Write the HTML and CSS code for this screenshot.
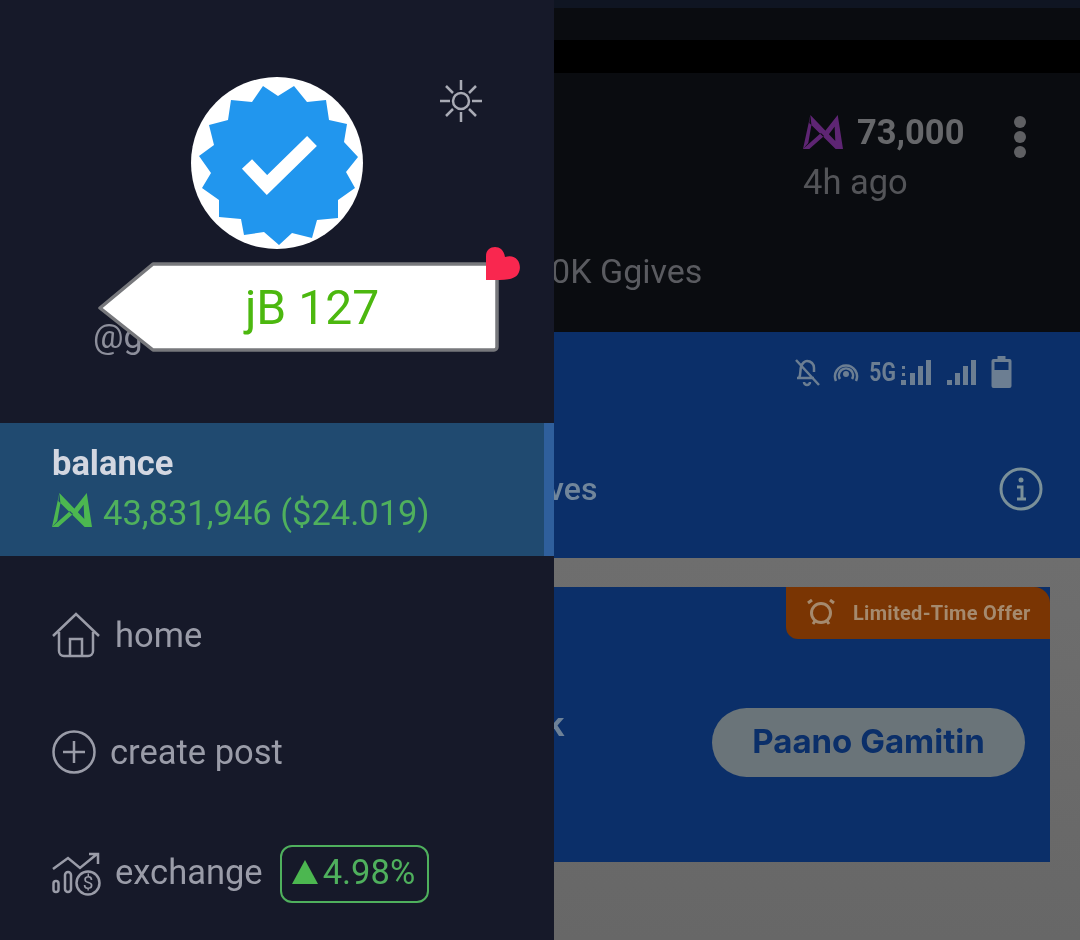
FILE: index.html
```html
<!DOCTYPE html>
<html lang="en">
<head>
    <meta charset="UTF-8">
    <meta name="viewport" content="width=device-width, initial-scale=1.0">
    <title>Menu</title>
    <link rel="stylesheet" href="styles.css">
</head>
<body>

<div class="drawer">
    <div class="profile">
        <div class="avatar">
            <svg viewBox="0 0 172 172" width="172" height="172">
                <polygon class="seal" points="72,9 87,19 103,9 116,25 135,23 138,43 156,47 153,65 167,80 155,95 164,111 147,123 147,141 126,143 121,161 101,156 88,168 73,155 53,158 50,142 28,140 28,123 11,111 20,96 8,79 23,68 18,48 37,43 40,23 61,25"/>
                <polyline class="tick" points="56,87 76,108 121,64"/>
            </svg>
        </div>
        <svg class="sun" viewBox="0 0 44 44" width="44" height="44">
            <circle cx="22" cy="22" r="8"/>
            <path d="M22 1v10M22 33v10M1 22h10M33 22h10M7 7l7 7M30 30l7 7M7 37l7-7M30 14l7-7"/>
        </svg>
        <div class="handle">@g</div>
        <div class="tag">
            <svg class="tag-shape" viewBox="0 0 403 91" width="403" height="91">
                <path d="M56 2 H397 a3 3 0 0 1 3 3 V85 a3 3 0 0 1 -3 3 H56 L3 46 Z"/>
            </svg>
            <span class="tag-text">jB 127</span>
            <svg class="tag-heart" viewBox="0 0 36 36" width="36" height="36">
                <path d="M1 34 V10 C1 -1 18 -3 20 11 C33 7 38 20 33 28 C29 35 14 34 1 34 Z"/>
            </svg>
        </div>
    </div>

    <div class="balance">
        <div class="balance-label">balance</div>
        <div class="balance-row">
            <svg class="coin" viewBox="0 0 38 34" width="40" height="34" preserveAspectRatio="none">
                <path d="M7 0 L0 34 L5 28 L8 10 Z M7 0 L38 34 L31 34 L6 8 Z M0 34 L6 34 L20 21 L17 18 Z M33 0 L32 9 L24 20 L21 16 Z M33 0 L38 34 L31 34 L30 10 Z"/>
            </svg>
            <span>43,831,946 ($24.019)</span>
        </div>
    </div>

    <div class="nav">
        <div class="nav-item item-home">
            <svg class="nav-icon" viewBox="0 0 48 46" width="48" height="46">
                <path d="M1 24 L24 2 L47 24 M7 20 V39 a5 5 0 0 0 5 5 H36 a5 5 0 0 0 5 -5 V20 M18 44 V27 H30 V44"/>
            </svg>
            <span>home</span>
        </div>
        <div class="nav-item item-post">
            <svg class="nav-icon" viewBox="0 0 44 44" width="44" height="44">
                <circle cx="22" cy="22" r="20.5"/>
                <path d="M22 11 V33 M11 22 H33"/>
            </svg>
            <span>create post</span>
        </div>
        <div class="nav-item item-exchange">
            <svg class="nav-icon" viewBox="0 0 50 44" width="50" height="44">
                <path d="M1 17 L16 6 L28 16 L45 2 M37 2 H46 V12"/>
                <rect x="1.5" y="29" width="5" height="11" rx="2.5"/>
                <rect x="13" y="20" width="6" height="20" rx="3"/>
                <circle cx="36" cy="31" r="11.5"/>
            </svg>
            <span class="dollar">$</span>
            <span class="exchange-label">exchange</span>
            <div class="change">
                <span class="up"></span>
                <span>4.98%</span>
            </div>
        </div>
    </div>
</div>

<div class="backdrop">
    <div class="strip"></div>
    <div class="bar-dark"></div>
    <div class="bar-black"></div>

    <div class="post">
        <div class="post-head">
            <div class="post-meta">
                <div class="post-amount">
                    <svg class="coin-dim" viewBox="0 0 38 34" width="40" height="34" preserveAspectRatio="none">
                        <path d="M7 0 L0 34 L5 28 L8 10 Z M7 0 L38 34 L31 34 L6 8 Z M0 34 L6 34 L20 21 L17 18 Z M33 0 L32 9 L24 20 L21 16 Z M33 0 L38 34 L31 34 L30 10 Z"/>
                    </svg>
                    <span>73,000</span>
                </div>
                <div class="post-time">4h ago</div>
            </div>
            <div class="dots"><i></i><i></i><i></i></div>
        </div>
        <div class="post-text">10K Ggives</div>
    </div>

    <div class="app-head">
        <div class="status">
            <svg viewBox="0 0 28 30" width="28" height="30">
                <path d="M6 21 C8 17 7 13 8 10 C9 6 12 4 14 4 C18 4 21 7 21 11 V15 M21 21 H4 M11 25 a3 3 0 0 0 6 0 M3 3 L26 28"/>
            </svg>
            <svg class="status-gap" viewBox="0 0 26 26" width="26" height="26">
                <path d="M3 22 a11 11 0 1 1 20 0 M7 20 a7 7 0 1 1 12 0"/>
                <circle class="solid" cx="13" cy="15" r="3"/>
            </svg>
            <span class="status-5g">5G</span>
            <svg class="solid" viewBox="0 0 30 28" width="30" height="28">
                <rect x="0" y="22" width="5" height="5"/><rect x="1" y="8" width="3" height="3"/><rect x="1" y="15" width="3" height="3"/>
                <rect x="9" y="15" width="5" height="12"/><rect x="17" y="8" width="5" height="19"/><rect x="25" y="2" width="5" height="25"/>
            </svg>
            <svg class="solid status-wide" viewBox="0 0 30 28" width="30" height="28">
                <rect x="1" y="22" width="5" height="5"/>
                <rect x="9" y="15" width="5" height="12"/><rect x="17" y="8" width="5" height="19"/><rect x="25" y="2" width="5" height="25"/>
            </svg>
            <svg class="solid status-wide" viewBox="0 0 20 32" width="21" height="32">
                <path d="M6 0 H14 V3 H18 a2 2 0 0 1 2 2 V30 a2 2 0 0 1 -2 2 H2 a2 2 0 0 1 -2 -2 V5 a2 2 0 0 1 2 -2 H6 Z M3 6 V14 H17 V6 Z" fill-rule="evenodd"/>
            </svg>
        </div>
        <div class="app-title">
            <span class="app-name">Ggives</span>
            <svg class="info" viewBox="0 0 44 44" width="44" height="44">
                <circle cx="22" cy="22" r="20"/>
                <circle class="solid" cx="22" cy="13" r="2.5"/>
                <path d="M18 20 H23 V31 M18 32 H27"/>
            </svg>
        </div>
    </div>

    <div class="content">
        <div class="card">
            <div class="offer">
                <svg viewBox="0 0 28 28" width="28" height="28">
                    <circle cx="14" cy="14" r="9.5"/>
                    <path d="M1 4 L5 1 M27 4 L23 1 M6 25 L8 22 M22 25 L20 22"/>
                </svg>
                <span>Limited-Time Offer</span>
            </div>
            <div class="card-body">
                <span class="card-text">k</span>
                <div class="how-to">Paano Gamitin</div>
            </div>
        </div>
    </div>
</div>

</body>
</html>
```

FILE: styles.css
```css
* {
    margin: 0;
    padding: 0;
    box-sizing: border-box;
    font-family: Roboto, sans-serif;
}

body {
    width: 1080px;
    height: 940px;
    display: flex;
    overflow: hidden;
    background: #161929;
}

/* Drawer */
.drawer {
    width: 554px;
    height: 940px;
    flex-shrink: 0;
    background: #161929;
    display: flex;
    flex-direction: column;
    filter: blur(0.4px);
}

.profile {
    height: 423px;
    position: relative;
}

.avatar {
    position: absolute;
    left: 191px;
    top: 77px;
    width: 172px;
    height: 172px;
    border-radius: 50%;
    background: #fff;
}

.seal {
    fill: #2196ee;
}

.tick {
    fill: none;
    stroke: #fff;
    stroke-width: 14;
}

.sun {
    position: absolute;
    left: 439px;
    top: 79px;
    fill: none;
    stroke: #a9abb5;
    stroke-width: 2.5;
}

.handle {
    position: absolute;
    left: 93px;
    top: 316px;
    font-size: 34px;
    color: #8d8f9b;
}

.tag {
    position: absolute;
    left: 97px;
    top: 262px;
    width: 403px;
    height: 91px;
    display: flex;
    align-items: center;
    justify-content: center;
    padding-left: 27px;
}

.tag-shape {
    position: absolute;
    left: 0;
    top: 0;
    fill: #fff;
    stroke: #77787c;
    stroke-width: 3.5;
    stroke-linejoin: round;
}

.tag-text {
    position: relative;
    font-size: 48px;
    color: #4cb80f;
}

.tag-heart {
    position: absolute;
    left: 388px;
    top: -16px;
    fill: #f9274f;
}

.balance {
    height: 133px;
    padding: 20px 0 0 52px;
    background: #204a70;
    border-right: 10px solid #2f5f9c;
}

.balance-label {
    font-size: 34.5px;
    font-weight: 700;
    color: #d3d7e1;
}

.balance-row {
    display: flex;
    align-items: flex-end;
    gap: 11px;
    margin-top: 10px;
    font-size: 34.5px;
    color: #4fb05d;
}

.coin {
    fill: #4cb750;
    margin-bottom: 6px;
}

.nav {
    display: flex;
    flex-direction: column;
    padding-left: 52px;
    font-size: 34.5px;
    color: #9a9ca8;
}

.nav-item {
    display: flex;
    align-items: center;
    position: relative;
}

.nav-icon {
    fill: none;
    stroke: #9a9ca8;
    stroke-width: 2.5;
}

.item-home {
    margin-top: 56px;
    height: 46px;
    gap: 15px;
}

.item-post {
    margin-top: 72px;
    height: 44px;
    gap: 14px;
}

.item-exchange {
    margin-top: 71px;
    height: 58px;
    gap: 13px;
}

.exchange-label {
    margin-bottom: 4px;
}

.dollar {
    position: absolute;
    left: 28px;
    top: 26px;
    width: 16px;
    text-align: center;
    font-size: 19px;
}

.change {
    display: flex;
    align-items: center;
    gap: 5px;
    height: 58px;
    margin-left: 4px;
    padding: 0 12px 4px 10px;
    border: 2px solid #4fb05d;
    border-radius: 12px;
    color: #4fb05d;
}

.up {
    width: 0;
    height: 0;
    border-left: 13px solid transparent;
    border-right: 13px solid transparent;
    border-bottom: 24px solid #4cb750;
}

/* What lies behind the drawer */
.backdrop {
    flex: 1;
    height: 940px;
    overflow: hidden;
    display: flex;
    flex-direction: column;
    filter: blur(0.6px);
}

.strip {
    height: 8px;
    background: #0f1522;
}

.bar-dark {
    height: 32px;
    background: #0a0c10;
}

.bar-black {
    height: 33px;
    background: #000;
}

.post {
    height: 259px;
    background: #0a0c10;
    position: relative;
}

.post-head {
    display: flex;
    justify-content: flex-end;
    gap: 41px;
    padding: 39px 54px 0 0;
}

.post-amount {
    display: flex;
    align-items: center;
    gap: 14px;
    font-size: 34.5px;
    font-weight: 700;
    color: #66676a;
}

.coin-dim {
    fill: #5e2573;
}

.post-time {
    font-size: 34.5px;
    color: #535458;
    margin-top: 10px;
}

.post-meta {
    width: 170px;
}

.dots {
    display: flex;
    flex-direction: column;
    gap: 3px;
    padding-top: 4px;
}

.dots i {
    display: block;
    width: 12px;
    height: 12px;
    border-radius: 50%;
    background: #5f6063;
}

.post-text {
    margin: 49px 0 0 -22px;
    font-size: 34px;
    color: #5a5b60;
}

.app-head {
    height: 226px;
    background: #0b2f69;
    color: #7d8f9f;
}

.status {
    display: flex;
    align-items: center;
    justify-content: flex-end;
    gap: 9px;
    height: 80px;
    padding-right: 68px;
    fill: none;
    stroke: #6c7e92;
    stroke-width: 2.5;
}

.status .solid {
    fill: #6c7e92;
    stroke: none;
}

.status-gap {
    margin-left: 3px;
}

.status-wide {
    margin-left: 6px;
}

.status-5g {
    font-size: 25px;
    font-weight: 700;
    color: #6c7e92;
    transform: scaleX(0.85);
    margin: 0 -6px 0 -1px;
}

.app-title {
    display: flex;
    align-items: center;
    justify-content: space-between;
    padding: 63px 37px 0 0;
    margin-left: -54px;
    height: 90px;
}

.app-name {
    font-size: 32px;
    font-weight: 500;
    color: #71869b;
}

.info {
    fill: none;
    stroke: #7a9099;
    stroke-width: 3;
}

.info .solid {
    fill: #7a9099;
    stroke: none;
}

.content {
    flex: 1;
    padding: 29px 30px 0 0;
    background: linear-gradient(#6e6e6e, #676767);
}

.card {
    height: 275px;
    background: #0b2f69;
    position: relative;
}

.offer {
    position: absolute;
    right: 0;
    top: 0;
    width: 264px;
    height: 52px;
    display: flex;
    align-items: center;
    gap: 18px;
    padding-left: 21px;
    background: #7a3503;
    border-radius: 0 16px 0 12px;
    font-size: 20px;
    font-weight: 700;
    letter-spacing: 0.3px;
    color: #a58a6e;
    fill: none;
    stroke: #a58a6e;
    stroke-width: 3;
}

.card-body {
    height: 275px;
    display: flex;
    justify-content: space-between;
    padding: 117px 25px 0 0;
}

.card-text {
    margin: 0 0 0 -8px;
    font-size: 34px;
    font-weight: 700;
    color: #6d8197;
}

.how-to {
    width: 313px;
    height: 69px;
    display: flex;
    align-items: center;
    justify-content: center;
    margin-top: 4px;
    padding-bottom: 3px;
    border-radius: 35px;
    background: #6a7479;
    font-size: 33px;
    font-weight: 700;
    font-family: Inter, sans-serif;
    color: #0b2f69;
}
```
